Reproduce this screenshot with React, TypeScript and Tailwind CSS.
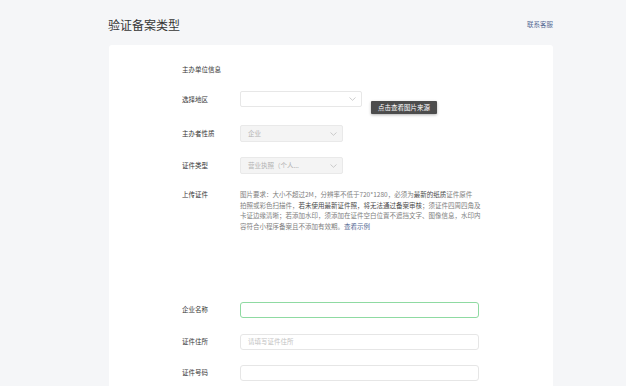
import React from 'react';

const font = { fontFamily: '"Noto Sans CJK SC", "Noto Sans", sans-serif' };

const Chevron = () => (
  <svg width="7" height="4" viewBox="0 0 7 4" fill="none" className="shrink-0">
    <path d="M0.5 0.5 L3.5 3.3 L6.5 0.5" stroke="#b8b8b8" strokeWidth="0.7" />
  </svg>
);

const Label = ({ children }: { children: React.ReactNode }) => (
  <div className="w-[58px] shrink-0 text-[6.5px] leading-[9px] text-[#353535]">{children}</div>
);

const App = () => {
  return (
    <div className="h-[386px] w-[626px] overflow-hidden bg-[#f5f6f8]" style={font}>
      <div className="ml-[108px] w-[445px]">
        {/* Header */}
        <div className="flex h-[45px] items-center justify-between pt-[4px]">
          <h1 className="text-[12px] font-normal leading-[16px] text-[#353535]">验证备案类型</h1>
          <a className="text-[6.5px] leading-[9px] text-[#576b95]">联系客服</a>
        </div>

        {/* Card */}
        <div className="ml-[1px] h-[400px] rounded-t-[3px] bg-white pl-[73px] pt-[20px]">
          <div className="text-[6.5px] leading-[9px] text-[#353535]">主办单位信息</div>

          {/* 选择地区 */}
          <div className="mt-[17px] flex h-[16px] items-center">
            <Label>选择地区</Label>
            <div className="relative">
              <div className="flex h-[16px] w-[122px] items-center justify-end rounded-[2px] border border-[#e7e7e7] bg-white pr-[5px]">
                <Chevron />
              </div>
              <div className="absolute left-[131px] top-[10px] flex h-[13px] w-[66px] items-center justify-center whitespace-nowrap rounded-[1px] bg-[#4c4c4c] text-[6.5px] text-white shadow-[0_1px_3px_rgba(0,0,0,0.3)]">
                点击查看图片来源
              </div>
            </div>
          </div>

          {/* 主办者性质 */}
          <div className="mt-[18px] flex h-[17px] items-center">
            <Label>主办者性质</Label>
            <div className="flex h-[17px] w-[103px] items-center justify-between rounded-[2px] border border-[#e9e9e9] bg-[#f4f4f4] pl-[7px] pr-[5px] text-[6.5px] text-[#b2b2b2]">
              <span>企业</span>
              <Chevron />
            </div>
          </div>

          {/* 证件类型 */}
          <div className="mt-[15px] flex h-[17px] items-center">
            <Label>证件类型</Label>
            <div className="flex h-[17px] w-[103px] items-center justify-between rounded-[2px] border border-[#e9e9e9] bg-[#f4f4f4] pl-[7px] pr-[5px] text-[6.5px] text-[#b2b2b2]">
              <span>营业执照（个人...</span>
              <Chevron />
            </div>
          </div>

          {/* 上传证件 */}
          <div className="mt-[15px] flex items-start">
            <div className="w-[58px] shrink-0 text-[6.5px] leading-[10.7px] text-[#353535]">上传证件</div>
            <p className="w-[245px] whitespace-nowrap text-[6.5px] leading-[10.7px] text-[#808080]">
              图片要求：大小不超过2M，分辨率不低于720*1280，必须为<span className="text-[#4a4a4a]">最新的纸质</span>证件原件
              <br />
              拍照或彩色扫描件，<span className="text-[#4a4a4a]">若未使用最新证件照，将无法通过备案审核</span>；须证件四周四角及
              <br />
              卡证边缘清晰；若添加水印，须添加在证件空白位置不遮挡文字、图像信息，水印内
              <br />
              容符合小程序备案且不添加有效期。<a className="text-[#576b95]">查看示例</a>
            </p>
          </div>

          {/* 企业名称 */}
          <div className="mt-[70px] flex h-[16px] items-center">
            <Label>企业名称</Label>
            <div className="h-[16px] w-[239px] rounded-[3px] border border-[#8fdaa2] bg-white" />
          </div>

          {/* 证件住所 */}
          <div className="mt-[16px] flex h-[16px] items-center">
            <Label>证件住所</Label>
            <div className="flex h-[16px] w-[239px] items-center rounded-[3px] border border-[#e6e6e6] bg-white pl-[7px] text-[6.5px] text-[#c2c2c2]">
              请填写证件住所
            </div>
          </div>

          {/* 证件号码 */}
          <div className="mt-[15px] flex h-[16px] items-center">
            <Label>证件号码</Label>
            <div className="h-[16px] w-[239px] rounded-[3px] border border-[#e6e6e6] bg-white" />
          </div>
        </div>
      </div>
    </div>
  );
};

export default App;
